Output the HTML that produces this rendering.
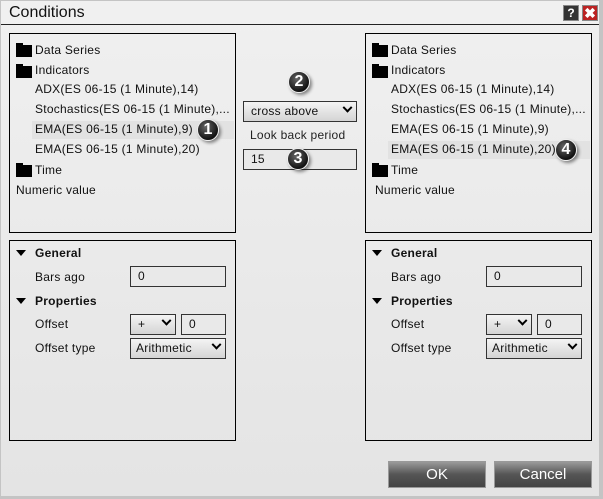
<!DOCTYPE html>
<html><head><style>
*{margin:0;padding:0;box-sizing:border-box}
body{width:603px;height:499px;position:relative;overflow:hidden;background:#c4c4c4;font-family:"Liberation Sans",Arial,sans-serif;font-size:12px;color:#111}
#win{position:absolute;left:1px;top:1px;width:598px;height:495px;background:linear-gradient(#f0f0f0,#e4e4e4)}
.a{position:absolute;white-space:nowrap}
.panel{position:absolute;border:1px solid #000}
.t{position:absolute;white-space:nowrap;line-height:14px;letter-spacing:0.25px}
.fold{position:absolute;width:16px;height:12px;background:#000}
.fold:before{content:"";position:absolute;left:0;top:-2px;width:7px;height:3px;background:#000}
.hl{position:absolute;background:#e2e2e2}
.sel,.inp{position:absolute;border:1px solid #333;background:#e9e9e9;line-height:18px;padding-left:7px;letter-spacing:0.25px}
.sel{background:linear-gradient(#f4f4f4,#d4d4d4)}
.chev{position:absolute;right:5px;top:5px;width:7px;height:7px;border-right:2px solid #000;border-bottom:2px solid #000;transform:rotate(45deg) translate(-2px,-2px)}
.badge{position:absolute;width:22px;height:22px;border-radius:50%;background:radial-gradient(circle at 40% 35%,#666,#111 70%);border:1px solid #eee;box-shadow:2px 2px 3px rgba(0,0,0,.45);color:#fff;font-weight:bold;font-size:16px;text-align:center;line-height:20px}
.tri{position:absolute;width:0;height:0;border-left:5px solid transparent;border-right:5px solid transparent;border-top:6px solid #000}
.btn{position:absolute;border:1px solid #999;background:linear-gradient(#9a9a9a,#555 50%,#444);color:#fff;font-size:15px;text-align:center;line-height:25px}
</style></head><body>
<div id="win">
<div class="a" style="left:8px;top:3px;font-size:16px">Conditions</div>
<div class="a" style="left:0;top:23px;width:598px;height:1px;background:#222"></div>
<div class="a" style="left:562px;top:4px;width:16px;height:16px;background:#333;border:1px solid #888;color:#fff;font-weight:bold;font-size:12px;text-align:center;line-height:14px">?</div>
<div class="a" style="left:581px;top:4px;width:16px;height:16px;background:#b22;border:1px solid #888;color:#fff;font-weight:bold;font-size:14px;text-align:center;line-height:14px">✖</div>
</div>

<div class="panel" style="left:9px;top:33px;width:227px;height:200px"></div>
<div class="hl" style="left:32px;top:121px;width:202px;height:18px"></div>
<div class="fold" style="left:16px;top:45px"></div><div class="t" style="left:35px;top:43px">Data Series</div>
<div class="fold" style="left:16px;top:66px"></div><div class="t" style="left:35px;top:63px">Indicators</div>
<div class="t" style="left:35px;top:82px">ADX(ES 06-15 (1 Minute),14)</div>
<div class="t" style="left:35px;top:102px">Stochastics(ES 06-15 (1 Minute),...</div>
<div class="t" style="left:35px;top:122px">EMA(ES 06-15 (1 Minute),9)</div>
<div class="t" style="left:35px;top:142px">EMA(ES 06-15 (1 Minute),20)</div>
<div class="fold" style="left:16px;top:165px"></div><div class="t" style="left:35px;top:163px">Time</div>
<div class="t" style="left:16px;top:183px">Numeric value</div>
<div class="badge" style="left:197px;top:119px">1</div>

<div class="panel" style="left:365px;top:33px;width:227px;height:200px"></div>
<div class="hl" style="left:388px;top:141px;width:202px;height:18px"></div>
<div class="fold" style="left:372px;top:45px"></div><div class="t" style="left:391px;top:43px">Data Series</div>
<div class="fold" style="left:372px;top:66px"></div><div class="t" style="left:391px;top:63px">Indicators</div>
<div class="t" style="left:391px;top:82px">ADX(ES 06-15 (1 Minute),14)</div>
<div class="t" style="left:391px;top:102px">Stochastics(ES 06-15 (1 Minute),...</div>
<div class="t" style="left:391px;top:122px">EMA(ES 06-15 (1 Minute),9)</div>
<div class="t" style="left:391px;top:142px">EMA(ES 06-15 (1 Minute),20)</div>
<div class="fold" style="left:372px;top:165px"></div><div class="t" style="left:391px;top:163px">Time</div>
<div class="t" style="left:375px;top:183px">Numeric value</div>
<div class="badge" style="left:555px;top:139px">4</div>

<div class="badge" style="left:288px;top:71px">2</div>
<div class="sel" style="left:243px;top:101px;width:114px;height:21px">cross above<div class="chev"></div></div>
<div class="t" style="left:250px;top:128px;color:#222">Look back period</div>
<div class="inp" style="left:243px;top:149px;width:114px;height:21px">15</div>
<div class="badge" style="left:287px;top:148px">3</div>

<div class="panel" style="left:9px;top:240px;width:227px;height:201px"></div>
<div class="tri" style="left:16px;top:250px"></div><div class="t" style="left:35px;top:246px;font-weight:bold">General</div>
<div class="t" style="left:35px;top:270px">Bars ago</div>
<div class="inp" style="left:130px;top:266px;width:96px;height:21px">0</div>
<div class="tri" style="left:16px;top:298px"></div><div class="t" style="left:35px;top:294px;font-weight:bold">Properties</div>
<div class="t" style="left:35px;top:317px">Offset</div>
<div class="sel" style="left:130px;top:314px;width:46px;height:21px">+<div class="chev"></div></div>
<div class="inp" style="left:181px;top:314px;width:45px;height:21px">0</div>
<div class="t" style="left:35px;top:341px">Offset type</div>
<div class="sel" style="left:130px;top:338px;width:96px;height:21px;padding-left:5px">Arithmetic<div class="chev"></div></div>

<div class="panel" style="left:365px;top:240px;width:227px;height:201px"></div>
<div class="tri" style="left:372px;top:250px"></div><div class="t" style="left:391px;top:246px;font-weight:bold">General</div>
<div class="t" style="left:391px;top:270px">Bars ago</div>
<div class="inp" style="left:486px;top:266px;width:96px;height:21px">0</div>
<div class="tri" style="left:372px;top:298px"></div><div class="t" style="left:391px;top:294px;font-weight:bold">Properties</div>
<div class="t" style="left:391px;top:317px">Offset</div>
<div class="sel" style="left:486px;top:314px;width:46px;height:21px">+<div class="chev"></div></div>
<div class="inp" style="left:537px;top:314px;width:45px;height:21px">0</div>
<div class="t" style="left:391px;top:341px">Offset type</div>
<div class="sel" style="left:486px;top:338px;width:96px;height:21px;padding-left:5px">Arithmetic<div class="chev"></div></div>

<div class="btn" style="left:388px;top:461px;width:98px;height:27px">OK</div>
<div class="btn" style="left:494px;top:461px;width:98px;height:27px">Cancel</div>
</body></html>
